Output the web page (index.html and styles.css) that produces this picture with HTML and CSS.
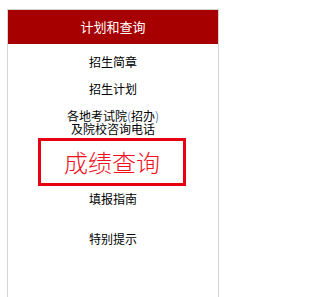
FILE: index.html
```html
<!DOCTYPE html>
<html lang="zh-CN">
<head>
<meta charset="utf-8">
<title>计划和查询</title>
<link rel="stylesheet" href="styles.css">
</head>
<body>
<div class="panel">
  <div class="panel-head">计划和查询</div>
  <ul class="menu">
    <li class="item item-first"><a href="#">招生简章</a></li>
    <li class="item"><a href="#">招生计划</a></li>
    <li class="item item-multi"><a href="#"><span class="line">各地考试院<span class="paren">(</span>招办<span class="paren">)</span></span><span class="line">及院校咨询电话</span></a></li>
    <li class="item item-feature"><a href="#">成绩查询</a></li>
    <li class="item item-guide"><a href="#">填报指南</a></li>
    <li class="item item-tips"><a href="#">特别提示</a></li>
  </ul>
</div>
</body>
</html>
```

FILE: styles.css
```css
html, body {
  margin: 0;
  padding: 0;
  background: #ffffff;
}
body {
  font-family: "Noto Sans CJK SC", "Noto Sans", sans-serif;
  height: 297px;
  overflow: hidden;
}
.panel {
  margin: 9px 0 0 7px;
  width: 212px;
  box-sizing: border-box;
  border: 1px solid #d4d4d4;
  border-bottom: none;
  height: 300px;
}
.panel-head {
  height: 34px;
  line-height: 34px;
  background: #a60000;
  color: #ffffff;
  font-size: 13px;
  text-align: center;
}
.menu {
  list-style: none;
  margin: 0;
  padding: 4px 0 0 0;
}
.item {
  text-align: center;
  font-size: 12px;
  line-height: 27px;
}
.item a {
  color: #000000;
  text-decoration: none;
}
.item-multi {
  line-height: 13px;
  margin-top: 7px;
}
.line {
  display: block;
  height: 13px;
}
.paren {
  color: #5a7fb8;
}
.item-feature {
  margin: 3px 0 0 30px;
  width: 148px;
  height: 48px;
  box-sizing: border-box;
  border: 3px solid #e60012;
  line-height: 42px;
  font-size: 24px;
}
.item-feature a {
  color: #f0101e;
  font-weight: 300;
}
.item-guide {
  line-height: 25px;
}
.item-tips {
  line-height: 25px;
  margin-top: 15px;
}
```
